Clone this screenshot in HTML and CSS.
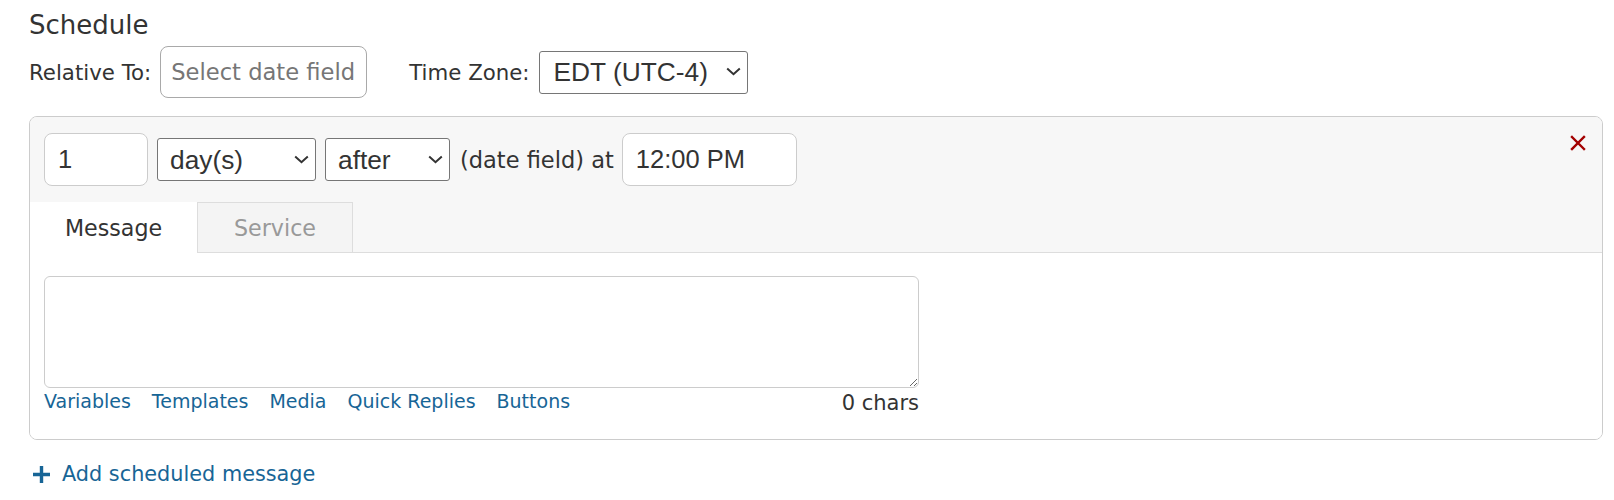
FILE: index.html
```html
<!DOCTYPE html>
<html lang="en">
<head>
<meta charset="utf-8">
<title>Schedule</title>
<link rel="stylesheet" href="styles.css">
</head>
<body>
<div class="page">
  <div class="title">Schedule</div>
  <div class="rel-row">
    <span class="label">Relative To:</span>
    <div class="date-picker">Select date field</div>
    <span class="label tz-label">Time Zone:</span>
    <span class="sel-wrap">
      <select class="sel sel-tz"><option>EDT (UTC-4)</option></select>
      <svg class="chev" width="15" height="9" viewBox="0 0 15 9"><path d="M1.2 1.5 L7.5 7.2 L13.8 1.5" stroke="#333" stroke-width="2" fill="none"/></svg>
    </span>
  </div>

  <div class="card">
    <div class="card-head">
      <div class="when-row">
        <input class="txt txt-num" type="text" value="1">
        <span class="sel-wrap">
          <select class="sel sel-unit"><option>day(s)</option></select>
          <svg class="chev" width="15" height="9" viewBox="0 0 15 9"><path d="M1.2 1.5 L7.5 7.2 L13.8 1.5" stroke="#333" stroke-width="2" fill="none"/></svg>
        </span>
        <span class="sel-wrap">
          <select class="sel sel-dir"><option>after</option></select>
          <svg class="chev" width="15" height="9" viewBox="0 0 15 9"><path d="M1.2 1.5 L7.5 7.2 L13.8 1.5" stroke="#333" stroke-width="2" fill="none"/></svg>
        </span>
        <span class="when-text">(date field) at</span>
        <input class="txt txt-time" type="text" value="12:00 PM">
      </div>
      <div class="tabs">
        <div class="tab active">Message</div>
        <div class="tab">Service</div>
        <div class="tab-rest"></div>
      </div>
      <button class="close" aria-label="Remove">
        <svg width="16" height="16" viewBox="0 0 16 16"><path d="M2 2 L14 14 M14 2 L2 14" stroke="#a30000" stroke-width="2.4" stroke-linecap="square" fill="none"/></svg>
      </button>
    </div>
    <div class="card-body">
      <textarea class="msg"></textarea>
      <div class="msg-foot">
        <div class="links">
          <a href="#">Variables</a>
          <a href="#">Templates</a>
          <a href="#">Media</a>
          <a href="#">Quick Replies</a>
          <a href="#">Buttons</a>
        </div>
        <span class="chars">0 chars</span>
      </div>
    </div>
  </div>

  <a class="add" href="#">
    <svg width="17" height="17" viewBox="0 0 17 17"><path d="M8.5 0 V17 M0 8.5 H17" stroke="#176596" stroke-width="3.4" fill="none"/></svg>
    <span>Add scheduled message</span>
  </a>
</div>
</body>
</html>
```

FILE: styles.css
```css
* { box-sizing: border-box; }
body {
  margin: 0;
  background: #fff;
  color: #333;
  font-family: "DejaVu Sans", Verdana, sans-serif;
}
.page {
  padding: 10px 11px 0 29px;
}
.title {
  font-size: 26px;
  line-height: 30px;
}
.rel-row {
  display: flex;
  align-items: center;
  margin-top: 6px;
}
.label {
  font-size: 21.3px;
  margin-right: 9px;
}
.tz-label {
  margin-left: 42px;
}
.date-picker {
  width: 207px;
  height: 52px;
  border: 1px solid #a9a9a9;
  border-radius: 8px;
  padding-left: 10px;
  display: flex;
  align-items: center;
  font-size: 22.6px;
  color: #767676;
  background: #fff;
  white-space: nowrap;
  overflow: hidden;
}
.sel-wrap {
  position: relative;
  display: inline-flex;
}
.chev {
  position: absolute;
  right: 7px;
  top: 50%;
  margin-top: -5px;
  pointer-events: none;
}
.sel {
  -webkit-appearance: none;
  appearance: none;
  font-family: "Liberation Sans", Arial, sans-serif;
  font-size: 26.3px;
  color: #333;
  height: 43px;
  border: 1px solid #767676;
  border-radius: 3px;
  background: #fff;
  padding: 0 30px 0 12px;
  outline: none;
}
.sel-tz { width: 209px; padding-left: 14px; }
.card {
  position: relative;
  margin-top: 18px;
  border: 1px solid #ccc;
  border-radius: 8px;
  overflow: hidden;
}
.card-head {
  background: #f7f7f7;
  padding-top: 16px;
}
.when-row {
  display: flex;
  align-items: center;
  padding: 0 14px;
  gap: 9px;
}
.txt {
  font-family: "Liberation Sans", Arial, sans-serif;
  font-size: 25.5px;
  color: #333;
  height: 53px;
  border: 1px solid #ccc;
  border-radius: 8px;
  background: #fff;
  padding: 0 13px;
  outline: none;
}
.txt-num { width: 104px; }
.sel-unit { width: 159px; }
.sel-dir { width: 125px; }
.sel-wrap + .sel-wrap { margin-right: 1px; }
.when-text {
  font-size: 22.5px;
  margin-right: -1px;
}
.txt-time { width: 175px; }
.tabs {
  display: flex;
  margin-top: 16px;
  height: 51px;
}
.tab {
  font-size: 22.2px;
  display: flex;
  align-items: center;
  justify-content: center;
  height: 51px;
}
.tab.active {
  width: 167px;
  background: #fff;
  color: #333;
}
.tab:not(.active) {
  width: 156px;
  background: #f4f4f4;
  color: #999;
  border: 1px solid #ddd;
  padding-top: 1px;
}
.tab-rest {
  flex: 1;
  border-bottom: 1px solid #ddd;
}
.close {
  position: absolute;
  top: 18px;
  right: 16px;
  background: none;
  border: 0;
  padding: 0;
  width: 16px;
  height: 16px;
  display: flex;
}
.card-body {
  padding: 23px 14px 26px;
  background: #fff;
}
.msg {
  display: block;
  width: 875px;
  height: 112px;
  border: 1px solid #ccc;
  border-radius: 6px;
  resize: vertical;
  font-family: inherit;
  font-size: 18px;
  outline: none;
}
.msg-foot {
  width: 875px;
  display: flex;
  justify-content: space-between;
  align-items: center;
  height: 25px;
}
.links {
  display: flex;
  gap: 21px;
}
.links a {
  font-size: 19px;
  color: #176596;
  text-decoration: none;
}
.chars {
  font-size: 21px;
  padding-top: 4px;
}
.add {
  display: inline-flex;
  align-items: center;
  gap: 12px;
  margin-top: 22px;
  margin-left: 4px;
  color: #176596;
  text-decoration: none;
  font-size: 20.8px;
}
```
